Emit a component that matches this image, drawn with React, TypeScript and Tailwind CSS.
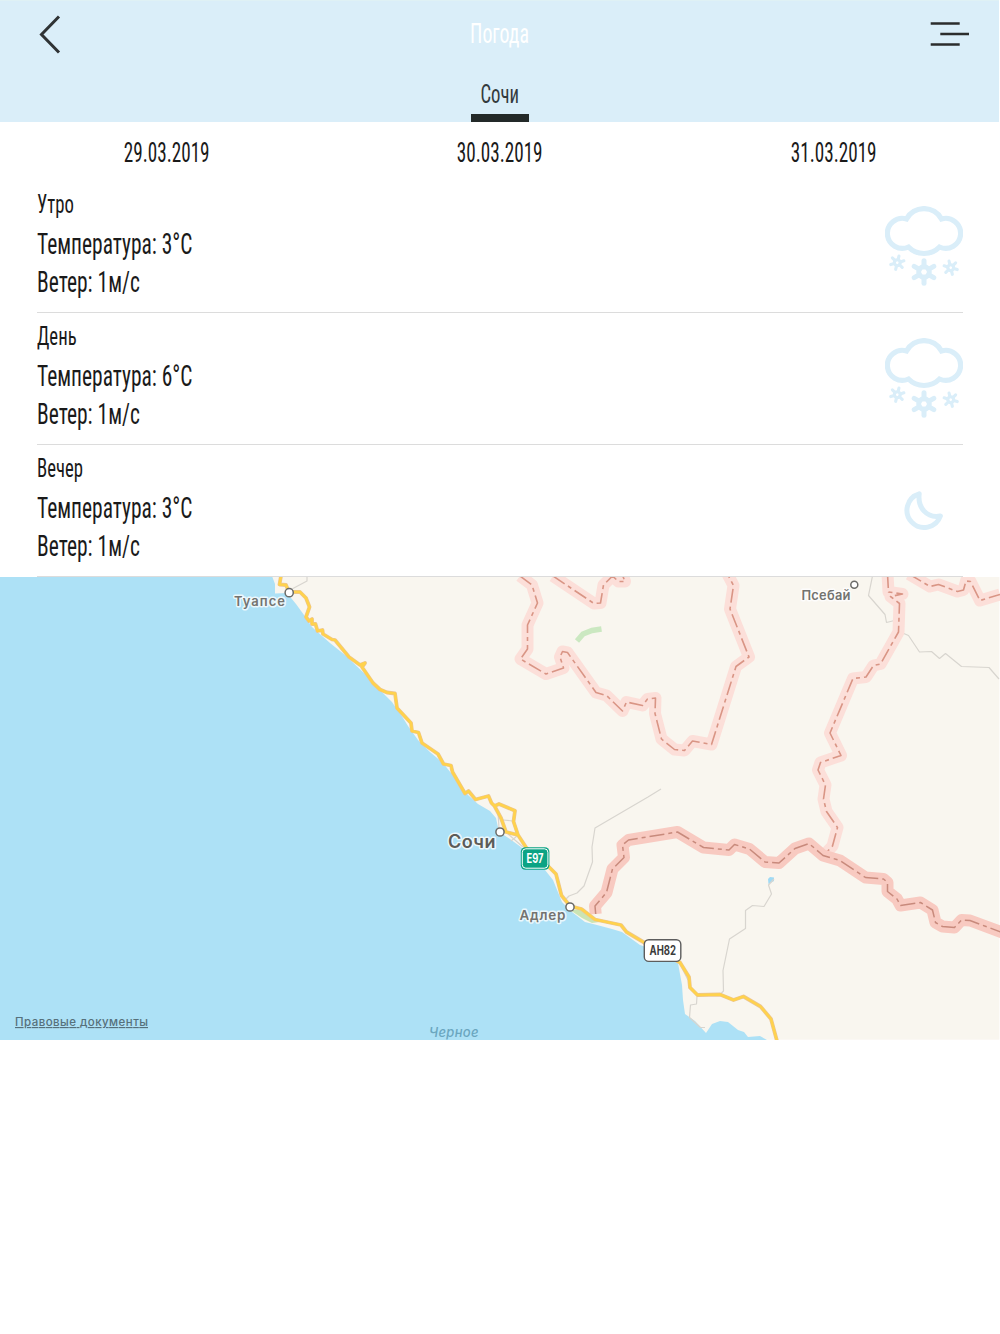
interface Forecast {
  part: string
  temperature: number
  wind: number
  icon: 'snow' | 'moon'
}

const dates = ['29.03.2019', '30.03.2019', '31.03.2019']

const forecasts: Forecast[] = [
  { part: 'Утро', temperature: 3, wind: 1, icon: 'snow' },
  { part: 'День', temperature: 6, wind: 1, icon: 'snow' },
  { part: 'Вечер', temperature: 3, wind: 1, icon: 'moon' },
]

function Snowflake({ x, y, r, hole, width, angle = 0 }: { x: number; y: number; r: number; hole: number; width: number; angle?: number }) {
  return (
    <g transform={`translate(${x} ${y}) rotate(${angle})`} strokeWidth={width} strokeLinecap="round">
      <circle r={hole + width / 2} fill="none" />
      {[0, 60, 120, 180, 240, 300].map((a) => (
        <line key={a} y1={-(hole + width / 2)} y2={-(r - width / 2)} transform={`rotate(${a})`} />
      ))}
    </g>
  )
}

function SnowIcon() {
  return (
    <svg width="78" height="80" viewBox="0 0 78 80" fill="none" stroke="#daeef9" strokeWidth="5.2" strokeLinejoin="miter">
      <path d="M21.5 12.9A20 20 0 0 1 56.5 12.9A15 15 0 1 1 54.5 41A21.7 21.7 0 0 1 23.5 41A15 15 0 1 1 21.5 12.9Z" />
      <Snowflake x={39} y={66} r={13.8} hole={2.8} width={5} />
      <Snowflake x={12.3} y={56.7} r={8.4} hole={1.4} width={3.1} angle={14} />
      <Snowflake x={65.7} y={61.7} r={8.4} hole={1.4} width={3.1} angle={-14} />
    </svg>
  )
}

function MoonIcon() {
  return (
    <svg width="78" height="80" viewBox="0 0 78 80" fill="none" stroke="#daeef9" strokeWidth="5" strokeLinejoin="round">
      <path d="M34.2 23.8A17.2 17.2 0 1 0 55.4 46C42 48.5 32.5 38 34.2 23.8Z" />
    </svg>
  )
}

function ForecastRow({ forecast }: { forecast: Forecast }) {
  return (
    <div className="flex h-[132px] items-start justify-between border-b border-[#dcdcdc]">
      <div className="flex flex-col items-start whitespace-nowrap pt-[3px] text-[29px]">
        <span className="origin-left scale-x-[0.72] text-[26px] leading-[40px]">{forecast.part}</span>
        <span className="mt-px origin-left scale-x-[0.74] leading-[38px]">Температура: {forecast.temperature}°C</span>
        <span className="origin-left scale-x-[0.74] leading-[38px]">Ветер: {forecast.wind}м/с</span>
      </div>
      <div className="pt-[25px]">
        {forecast.icon === 'snow' ? <SnowIcon /> : <MoonIcon />}
      </div>
    </div>
  )
}

const coast =
  'M0 576V1040H767L760 1036L748 1037L744 1032L738 1030L728 1022L720 1021L712 1024L706 1033L695 1021L685 1014L683 1000L682 985L678 963L655 950L640 945L622 932L612 929L597 925L585 922L572 912L562 902L553 880L545 870L525 850L510 839L499 832L496 818L490 811L478 804L468 795L455 778L443 763L430 752L418 740L408 726L400 713L396 708L392 702L380 690L365 674L345 655L330 643L312 627L304 615L296 604L287 593L275 593.5L275 584L272 576Z'

const coastRoad =
  'M281 576L279.5 584.5L286 585L289 592L300 592L306 598L309.5 607L306 617L309 621L312 619L312 624L315.5 624L317.5 631L322.5 630L323 634L332 639.5L335 640L349 657L360 665L365 663L362 667L373 683L380 689.5L387 692.5L395 693.5L397 708L411 723L412 731L418.5 732.5L422 743L438 754L443.5 764L451 765.5L452.5 772L465 793.5L468.5 791L475.5 799.5L488.5 796L491.5 803L494.5 806L501 818L506 832L518 835M494.5 806L499 804L515 810.7L513.5 821.5L518 835L526.5 848L548 866L556 874L561.5 895.5L570 906L581.5 909L595 919.5L621 925L626.5 932L645 943L658 950L680 962.5L689 977L690 987.5L697.5 995L720 994.5L733.5 1000L743.5 996.5L760.5 1006.5L771 1019L777 1041'

const regionBorders = [
  'M520 576L532 585L537.5 603L527.5 625L527.5 649L520.5 659L546 674L563.5 668L560 657L562.5 651.5L567.5 652.5L596 692.5L606.5 695.5L622.5 711L626.5 702L642.5 705.5L647.5 699L655.5 698L655 713.5L661.5 739L674.5 749.5L684.5 750.5L692.5 741L711.5 744.5L736 666.5L749 657L730 609L733.5 585.5L727.5 574',
  'M553 576L594 603.5L600.5 603L603.5 585L612.5 576L618.5 581.5L625 581.5L622 574',
  'M887.5 574L888.5 592L902.5 594L890.5 596.5L899.5 603.5L898.5 632L880.5 664L873.5 665.5L866 677L853 678.5L830 733L841 755.5L820.5 762.5L818 770L825.5 785L823.5 799L826.5 811.5L837.5 827.5L832.5 846L826 853',
  'M909 574L930 586.5L938.5 584.5L957.5 591.5L963.5 590L966 581L970.5 581.5L980 600.5L1000 594.5',
]

const stateBorder =
  'M595.7 914L595 906L606.5 892.5L612.5 869L624 857.5L622.5 845L628.5 840L677.5 832L703.5 847.5L729 850L734.5 844.5L749.5 849L765 862L779 863L795 848.5L809 843.5L823 855.5L840 860.5L865.5 877.5L883.5 879L887.5 882.5L887.5 891.5L897 899L900.5 905.5L920.5 902.5L932.5 910L935.5 922.5L942.5 926.5L954.5 927.5L961.5 920L970 920.5L1002 932.5'

const minorRoads =
  'M307 576V581L292 589M872.5 576L868.5 595.5L885 614.5L886.5 622.5L894.5 620.5L901.5 632.5L908.5 635.5L919.5 652L931.5 651.5L939.5 658.5L945.5 653.5L961.5 666.5L989 667.5L999 679M661 789L648 797L595 828L592 847L592.5 862L584 886L577 893L569 896L565 900M774 879L768.5 885L771.5 894L764 906.5L752.5 905.5L745.5 910.5V928.5L729.5 939L723 970.5L723.5 991L719.5 995M697 996L696.5 1004L690.5 1005L689.5 1017.5L700.5 1027.5H705M682 968L688 980M498 812L499 828M503 820L513 821M508 834L523 847M511 841L517 836'

const mapLabels = [
  { text: 'Туапсе', x: 234, y: 606, width: 51, size: 13, color: '#737370' },
  { text: 'Псебай', x: 801.5, y: 599.5, width: 49, size: 13, color: '#737370' },
  { text: 'Сочи', x: 448, y: 848, width: 47.5, size: 18, color: '#5c5c58' },
  { text: 'Адлер', x: 519.5, y: 920, width: 46, size: 13.5, color: '#737370' },
]

const towns = [
  { x: 289.2, y: 592.7, r: 4.1 },
  { x: 854.3, y: 584.7, r: 3.5 },
  { x: 500, y: 832, r: 4.1 },
  { x: 570, y: 907, r: 4.1 },
]

function CoastMap() {
  return (
    <svg className="block h-[463px] w-[1000px] font-['Inter',sans-serif]" viewBox="0 577 1000 463">
      <rect y="576.5" width="999.4" height="463.2" fill="#f9f6ef" />
      <path d={coast} fill="#ade1f6" />
      <path d="M570 910L582 909L595 919.5L600 922L592 923L582 918Z" fill="#cbe4b4" />
      <path d="M577 641L583 634L592 630.5L601.5 629" fill="none" stroke="#cbe8c1" strokeWidth="5.5" />
      <path d="M768 879L770 877L774 877.5L774 881L768.5 884Z" fill="#9fdaf5" />

      <g fill="none" strokeLinejoin="round">
        <path d={minorRoads} stroke="#d8d5cf" strokeWidth="1.2" />
        {regionBorders.map((d) => (
          <path key={d} d={d} stroke="#fcdfd9" strokeWidth="12" />
        ))}
        {regionBorders.map((d) => (
          <path key={d} d={d} stroke="#d99585" strokeWidth="1.6" strokeDasharray="14 4 4 4" />
        ))}
        <path d={stateBorder} stroke="#f8cac1" strokeWidth="12" />
        <path d={stateBorder} stroke="#c88a7c" strokeWidth="1.5" strokeDasharray="15 4 4 4" />
        <path d={coastRoad} stroke="#ebc592" strokeWidth="3.8" />
        <path d={coastRoad} stroke="#ffd24d" strokeWidth="2.6" />
      </g>

      {towns.map((town) => (
        <circle key={town.x} cx={town.x} cy={town.y} r={town.r} fill="#fff" stroke="#6b6b68" strokeWidth="1.5" />
      ))}

      {mapLabels.map((label) => (
        <text
          key={label.text}
          x={label.x}
          y={label.y}
          textLength={label.width}
          fontSize={label.size}
          fontWeight="600"
          fill={label.color}
          stroke="#fff"
          strokeOpacity="0.75"
          strokeWidth="3"
          strokeLinejoin="round"
          paintOrder="stroke"
        >
          {label.text}
        </text>
      ))}

      {/* Road shields */}
      <rect x="520.8" y="847.3" width="28.6" height="22.4" rx="4.5" fill="#0ba384" />
      <rect x="522.3" y="848.8" width="25.6" height="19.4" rx="3.5" fill="none" stroke="#fff" strokeWidth="1" />
      <text x="526.5" y="863" textLength="17" lengthAdjust="spacingAndGlyphs" fontSize="12.5" fontWeight="700" fill="#fff">E97</text>
      <rect x="644.3" y="939.8" width="36.5" height="21.6" rx="4.5" fill="#fff" stroke="#5d5d5d" strokeWidth="1.4" />
      <text x="649.5" y="955" textLength="26.5" lengthAdjust="spacingAndGlyphs" fontSize="12.5" fontWeight="700" fill="#3c3c3c">AH82</text>

      <text x="429" y="1036.5" textLength="49.5" fontSize="13" fontStyle="italic" fontWeight="500" fill="#6aa6bf">Черное</text>
      <text x="15" y="1026" textLength="133" fontSize="11.5" fontWeight="500" fill="#56707b" textDecoration="underline">Правовые документы</text>
    </svg>
  )
}

export default function App() {
  return (
    <div className="min-h-[1334px] w-[1000px] overflow-hidden bg-white font-['Roboto_Condensed','Roboto',sans-serif] text-[#1a1a1a]">
      <header className="flex h-[122px] w-[999px] flex-col border-t border-[#dff1f5] bg-[#daeef9]">
        <div className="grid h-[66px] grid-cols-3 items-center pl-[38px] pr-[30px]">
          <button className="justify-self-start">
            <svg width="24" height="40" viewBox="0 0 24 40" fill="none" stroke="#2f3335" strokeWidth="3">
              <path d="M21 2.5L3.5 20.5L21 38.5" />
            </svg>
          </button>
          <h1 className="-ml-[8px] scale-x-[0.71] justify-self-center text-[28px] leading-[40px] text-white">Погода</h1>
          <button className="justify-self-end">
            <svg width="39" height="26" viewBox="0 0 39 26" stroke="#2b2d2d" strokeWidth="2.6">
              <path d="M0.7 2.5H29.7M10.3 13H39.3M0.7 23.5H29.7" />
            </svg>
          </button>
        </div>
        <div className="flex flex-1 justify-center">
          <div className="flex w-[58px] flex-col items-center justify-between border-b-8 border-[#232929] pt-2">
            <span className="scale-x-[0.72] text-[26px] leading-[40px] text-[#333a3d]">Сочи</span>
          </div>
        </div>
      </header>

      <div className="grid h-[59px] grid-cols-3 items-center pt-[2px] text-center">
        {dates.map((date) => (
          <div key={date} className="scale-x-[0.71] text-[27px] leading-[40px]">{date}</div>
        ))}
      </div>

      <main className="px-[37px]">
        {forecasts.map((forecast) => (
          <ForecastRow key={forecast.part} forecast={forecast} />
        ))}
      </main>

      <CoastMap />
    </div>
  )
}
